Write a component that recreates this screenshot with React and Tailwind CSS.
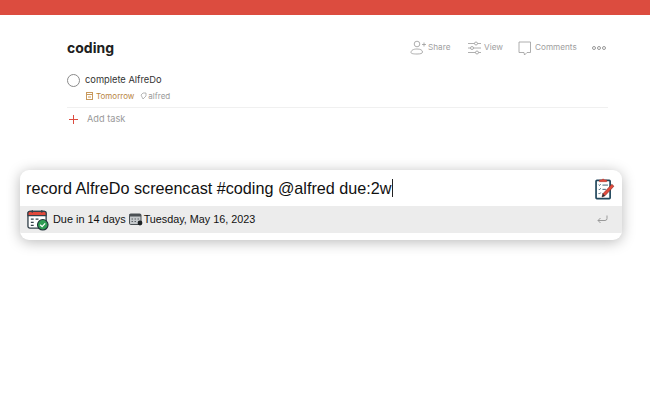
import React from 'react';

const CalendarCheck = () => (
  <svg width="22" height="22" viewBox="0 0 23 23" className="shrink-0">
    <rect x="1" y="2.500" width="19" height="17.500" rx="2" fill="#fff" stroke="#33414a" strokeWidth="1.400" />
    <path d="M1 7V4.500a2 2 0 0 1 2-2h15a2 2 0 0 1 2 2V7z" fill="#e2493b" stroke="#33414a" strokeWidth="1.200" />
    <path d="M5.500 1v3M15.500 1v3" stroke="#33414a" strokeWidth="1.200" />
    <path d="M4 10.500h3M9 10.500h3M4 14h3M4 17h3" stroke="#33414a" strokeWidth="1.300" />
    <circle cx="16.500" cy="16.500" r="5.500" fill="#2f9e54" stroke="#22333a" strokeWidth="1.200" />
    <path d="M13.800 16.500l2 2 3.200-3.500" fill="none" stroke="#fff" strokeWidth="1.300" />
  </svg>
);

const MiniCalendar = () => (
  <svg width="14" height="13" viewBox="0 0 14 13" className="shrink-0">
    <rect x="0.500" y="1" width="11.500" height="10.500" rx="1.200" fill="#c4c8cb" stroke="#4a5054" />
    <rect x="0.500" y="1" width="11.500" height="2.500" fill="#4a5054" />
    <path d="M2.500 6h1.500M5.500 6H7M8.500 6H10M2.500 8.500h1.500M5.500 8.500H7" stroke="#5a6064" strokeWidth="1" />
    <circle cx="11" cy="10" r="2.400" fill="#1f2326" />
  </svg>
);

const Clipboard = () => (
  <svg width="20" height="23" viewBox="0 0 23 27" className="shrink-0">
    <rect x="1" y="4" width="16.500" height="21.500" rx="1" fill="#fff" stroke="#21475c" strokeWidth="2" />
    <path d="M5 5.500V3.500h2.500a2 2 0 0 1 3.500 0h2.500v2z" fill="#e2493b" stroke="#b53a30" strokeWidth="0.600" />
    <path d="M4 9l1 1 1.500-1.800M4 14l1 1 1.500-1.800M4 19l1 1 1.500-1.800" fill="none" stroke="#21475c" strokeWidth="0.900" />
    <path d="M8.500 9.500h6.500M8.500 14.500h4M8.500 19.500h2" stroke="#21475c" strokeWidth="1" />
    <path d="M8 23.500l1-3.800L19.500 8.500l2.500 2.300L11.500 22z" fill="#e2493b" stroke="#7c2d26" strokeWidth="0.700" />
    <path d="M8 23.500l1-3.800 2.500 2.300z" fill="#21313a" />
  </svg>
);

const ActionIcon = ({ children, w = 16 }) => (
  <svg width={w} height="16" viewBox={`0 0 ${w} 16`} fill="none" stroke="#9a9a9a" strokeWidth="0.800" className="shrink-0">
    {children}
  </svg>
);

const App = () => {
  return (
    <div className="relative h-[418px] w-[650px] overflow-hidden bg-white font-['Inter',sans-serif]">
      <div className="h-[15px] bg-[#dc4c3f]" />

      <div className="mx-[67px] w-[539px]">
        <div className="mt-[15px] flex h-[33px] items-center justify-between pt-[2px]">
          <h1 className="text-[14px] font-bold text-[#202020]">coding</h1>
          <div className="flex items-center text-[8.200px] text-[#a0a0a0]">
            <div className="flex items-center gap-[2px]">
              <ActionIcon>
                <circle cx="7" cy="4" r="2.800" />
                <path d="M1 12.500c0-2.300 2.500-3.500 6-3.500s5.500 1.200 5.500 3c0 1.500-2 2-5.500 2s-6-.3-6-1.500zM12 4.500h4M14 2.500v4" />
              </ActionIcon>
              <span className="w-[22px]">Share</span>
            </div>
            <div className="ml-[18px] flex items-center gap-[3px]">
              <ActionIcon w={13}>
                <path d="M0 3.500h13M0 8h13M0 12.500h13" />
                <circle cx="8" cy="3.500" r="1.500" fill="#fff" />
                <circle cx="4" cy="8" r="1.500" fill="#fff" />
                <circle cx="9" cy="12.500" r="1.500" fill="#fff" />
              </ActionIcon>
              <span className="w-[18px]">View</span>
            </div>
            <div className="ml-[16px] flex items-center gap-[4px]">
              <ActionIcon w={13}>
                <path d="M1 2h11.500v10.500H9L6.500 15 6 12.500H1z" />
              </ActionIcon>
              <span className="w-[41px]">Comments</span>
            </div>
            <div className="ml-[16px] flex items-center gap-[1px]">
              <span className="size-[4px] rounded-full border border-[#999]" />
              <span className="size-[4px] rounded-full border border-[#999]" />
              <span className="size-[4px] rounded-full border border-[#999]" />
            </div>
          </div>
        </div>

        <div className="mt-[10px] w-[541px] border-b border-[#f0f0f0] pb-[5px]">
          <div className="flex h-[14px] items-center">
            <span className="size-[13px] rounded-full border border-[#8a8a8a]" />
            <span className="ml-[5px] text-[9.300px] leading-[14px] text-[#333]">complete AlfreDo</span>
          </div>
          <div className="ml-[19px] mt-[3px] flex h-[12px] items-center text-[8px]">
            <svg width="7" height="8" viewBox="0 0 7 8" fill="none" stroke="#c8995c" strokeWidth="1">
              <rect x="0.500" y="0.500" width="6" height="7" />
              <path d="M0.500 2.500h6M2 5h3" />
            </svg>
            <span className="ml-[3px] text-[#b8853f]">Tomorrow</span>
            <svg className="ml-[6px]" width="7" height="8" viewBox="0 0 7 8" fill="none" stroke="#9a9a9a" strokeWidth="0.700">
              <path d="M1 3l2-2h3v3L3 7z" />
            </svg>
            <span className="ml-[1px] text-[#999]">alfred</span>
          </div>
        </div>

        <div className="mt-[3px] flex h-[16px] items-center pl-[1px]">
          <svg width="11" height="11" viewBox="0 0 11 11" stroke="#dc4c3f" strokeWidth="1">
            <path d="M5.500 1v9M1 5.500h9" />
          </svg>
          <span className="ml-[8px] text-[9.200px] text-[#999]">Add task</span>
        </div>
      </div>

      {/* Alfred palette */}
      <div className="mx-[20px] mt-[43px] h-[70px] w-[602px] overflow-hidden rounded-[9px] bg-white font-['Liberation_Sans',sans-serif] shadow-[0_2px_14px_rgba(0,0,0,0.28)]">
        <div className="flex h-[36px] items-center justify-between pl-[6px] pr-[7px]">
          <div className="flex items-center text-[16.200px] text-[#111]">
            <span>record AlfreDo screencast #coding @alfred due:2w</span>
            <span className="h-[18px] w-px bg-[#222]" />
          </div>
          <Clipboard />
        </div>
        <div className="flex h-[27px] items-center bg-[#ececec] pl-[7px] pr-[14px]">
          <CalendarCheck />
          <span className="ml-[4px] text-[10.900px] text-[#111]">Due in 14 days</span>
          <span className="ml-[3px]"><MiniCalendar /></span>
          <span className="ml-px text-[10.800px] text-[#111]">Tuesday, May 16, 2023</span>
          <svg className="ml-auto" width="11" height="9" viewBox="0 0 11 9" fill="none" stroke="#9a9a9a" strokeWidth="1">
            <path d="M10 0.500v3a2 2 0 0 1-2 2H1M3.500 3L1 5.500 3.500 8" />
          </svg>
        </div>
      </div>
    </div>
  );
};

export default App;
